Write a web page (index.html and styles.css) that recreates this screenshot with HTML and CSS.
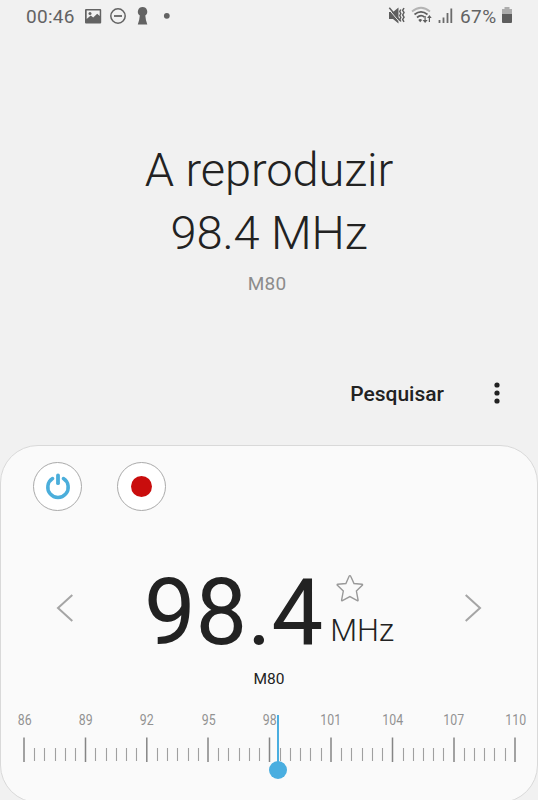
FILE: index.html
```html
<!DOCTYPE html>
<html lang="pt">
<head>
<meta charset="utf-8">
<title>Rádio</title>
<link rel="stylesheet" href="styles.css">
</head>
<body>
<div class="screen">
  <header class="status">
    <span class="clock">00:46</span>
    <svg class="notifications" width="90" height="22" viewBox="82 5 90 22">
      <path fill="#636363" fill-rule="evenodd" d="M86 9h14.200q1 0 1 1v12.500q0 1-1 1H86q-1 0-1-1V10q0-1 1-1zM86.700 10.600V19l4-3.500 2.500 2 4-3.800 2.500 2.200V10.600z"/>
      <circle cx="90" cy="13.500" r="1.500" fill="#636363"/>
      <circle cx="118" cy="16" r="7.200" fill="none" stroke="#636363" stroke-width="1.500"/>
      <path d="M114 16h8" stroke="#636363" stroke-width="1.800"/>
      <path fill="#636363" d="M142.600 7a4.700 4.700 0 0 1 2.700 8.500q.3 4.500 2 9h-9.500q1.700-4.500 2-9A4.700 4.700 0 0 1 142.600 7z"/>
      <circle cx="166.800" cy="15.800" r="2.900" fill="#636363"/>
    </svg>
    <svg class="signals" width="70" height="22" viewBox="386 5 70 22">
      <path fill="#5e5e5e" d="M389 12h4l5.500-4.500v16l-5.500-4.500h-4z"/>
      <path d="M388.500 9L400 22.500" stroke="#f1f1f1" stroke-width="1"/>
      <path d="M389.300 7.700L400 20.500" stroke="#5e5e5e" stroke-width="1.500"/>
      <path d="M400.800 9.500l-1 2 1 2-1 2 1 2-1 2 1 2M404 8l-1.300 2.300 1.300 2.300-1.300 2.300 1.300 2.300-1.300 2.300 1.300 2.300" fill="none" stroke="#5e5e5e" stroke-width="1.500"/>
      <path d="M412 11.500q9-7.500 18 0" fill="none" stroke="#b4b4b4" stroke-width="1.700"/>
      <path d="M414.500 14.500q6.500-5.400 13 0M417 17.500q4-3.400 7.500-.4" fill="none" stroke="#5e5e5e" stroke-width="1.700"/>
      <path fill="#5e5e5e" d="M418.300 20q2-1.800 3.800 0l-1.900 2.300zM425.700 16v4h2l-2.600 3-2.600-3h2v-4zM430 22v-4h1.700l-2.300-3-2.300 3h1.700v4z"/>
      <path d="M439.500 20v3M443.500 17.500V23M447.500 13v10M451.300 8.500V23" stroke="#6b6b6b" stroke-width="1.800"/>
    </svg>
    <span class="percent">67%</span>
    <svg class="battery" width="12" height="18" viewBox="0 0 12 18">
      <path fill="#adadad" d="M3.500 0h5v2H11v6H1V2h2.500z"/>
      <path fill="#5e5e5e" d="M1 7h10v8q0 1-1 1H2q-1 0-1-1z"/>
    </svg>
  </header>

  <section class="now">
    <h1>A reproduzir<br><span class="now-frequency">98.4 MHz</span></h1>
    <p>M80</p>
  </section>

  <nav class="actions">
    <span class="search">Pesquisar</span>
    <svg width="8" height="24" viewBox="0 0 8 24" fill="#222"><circle cx="4" cy="4" r="2.600"/><circle cx="4" cy="12" r="2.600"/><circle cx="4" cy="20" r="2.600"/></svg>
  </nav>

  <main class="card">
    <div class="controls">
      <span class="round"><svg width="30" height="30" viewBox="0 0 30 30" fill="none" stroke="#4baedb" stroke-linecap="round"><path d="M9.600 6.600A10.200 10.200 0 1 0 20.400 6.600" stroke-width="3.500"/><path d="M15 3.500v7.700" stroke-width="3.800"/></svg></span>
      <span class="round"><span class="record"></span></span>
    </div>
    <div class="tuner">
      <svg class="arrow" width="18" height="30" viewBox="0 0 18 30"><path d="M16.300 2L2 15l14.300 13" /></svg>
      <div class="frequency">
        <span class="value">98.4</span>
        <div class="unit">
          <svg width="30" height="30" viewBox="0 0 30 30"><path d="M14.900 1.600q.5 0 .8.700l3.300 7.200 8 .8q1 .1.300 1l-5.900 5.800 1.700 8.900q.1 1-.8.600L14.900 22.600 7.400 26.600q-.9.400-.8-.6l1.700-8.900-5.900-5.800q-.7-.9.300-1l8.200-.8 3.200-7.200q.3-.7.800-.7z"/></svg>
          <span>MHz</span>
        </div>
      </div>
      <svg class="arrow" width="18" height="30" viewBox="0 0 18 30"><path d="M1.700 2L16 15 1.700 28"/></svg>
    </div>
    <p class="station">M80</p>
    <div class="dial">
      <div class="labels"><span>86</span><span>89</span><span>92</span><span>95</span><span>98</span><span>101</span><span>104</span><span>107</span><span>110</span></div>
      <svg class="ticks" width="493" height="26" viewBox="0 0 493 26">
        <path d="M1 .5V25M62.500 .5V25M123.800 .5V25M185 .5V25M246.500 .5V25M308 .5V25M369.500 .5V25M431 .5V25M492 .5V25" stroke="#858585" stroke-width="1.500"/>
        <g stroke="#a0a0a0" stroke-width="1.100">
          <path d="M11.500 11v13M21.500 11v13M32.500 11v13M42.500 11v13M52.500 11v13M72.500 11v13M83.500 11v13M93.500 11v13M103.500 11v13M113.500 11v13"/>
          <path d="M134.500 11v13M144.500 11v13M154.500 11v13M165.500 11v13M175.500 11v13M195.500 11v13M205.500 11v13M216.500 11v13M226.500 11v13M236.500 11v13"/>
          <path d="M257.500 11v13M267.500 11v13M277.500 11v13M287.500 11v13M298.500 11v13M318.500 11v13M328.500 11v13M339.500 11v13M349.500 11v13M359.500 11v13"/>
          <path d="M380.500 11v13M390.500 11v13M400.500 11v13M410.500 11v13M420.500 11v13M441.500 11v13M451.500 11v13M461.500 11v13M471.500 11v13M482.500 11v13"/>
        </g>
      </svg>
      <span class="needle"></span>
    </div>
  </main>
</div>
</body>
</html>
```
FILE: styles.css
```css
* { box-sizing: border-box; }
body { margin: 0; background: #f1f1f1; color: #222; font-family: Roboto, "Liberation Sans", sans-serif; }
h1, p { margin: 0; font-weight: 400; }
svg { display: block; flex: none; }
.screen { height: 800px; overflow: hidden; display: flex; flex-direction: column; }
.status { height: 32px; flex: none; display: flex; align-items: center; padding: 0 25px 0 26px; font-size: 19px; line-height: 32px; color: #636363; }
.clock { width: 56px; padding-top: 2px; letter-spacing: .3px; }
.signals { margin-left: auto; }
.percent { width: 41px; padding: 2px 0 0 4px; letter-spacing: .4px; }
.battery { margin-left: 4px; }
.now { padding-top: 106px; text-align: center; flex: none; }
.now h1 { font-size: 47px; font-weight: 300; line-height: 63px; letter-spacing: -.1px; }
.now p { margin: 8px 4px 0 0; font-size: 19px; line-height: 24px; color: #8c8c8c; letter-spacing: .2px; }
.actions { flex: none; height: 149px; padding: 82px 37px 0 0; display: flex; justify-content: flex-end; gap: 49px; }
.search { font-size: 21px; font-weight: 500; line-height: 32px; }
.actions svg { margin-top: 3px; }
.card { flex: none; height: 358px; border: 1px solid #d9d9d9; border-radius: 38px; background: #fafafa; }
.controls { display: flex; gap: 35px; padding: 16px 0 0 32px; }
.round { width: 49px; height: 49px; display: flex; align-items: center; justify-content: center; border: 1px solid #aaa; border-radius: 50%; background: #fff; }
.record { width: 21px; height: 21px; border-radius: 50%; background: #c90d0d; }
.tuner { margin-top: 51px; height: 92px; display: flex; justify-content: space-between; padding: 0 55px; }
.arrow { margin-top: 31px; fill: none; stroke: #a5a5a5; stroke-width: 2; }
.frequency { display: flex; gap: 7px; }
.value { font-size: 92px; line-height: 102px; }
.unit { display: flex; flex-direction: column; }
.unit svg { margin: 12px 0 0 5px; fill: none; stroke: #999; stroke-width: 1.400; }
.unit span { font-size: 31px; font-weight: 300; line-height: 40px; margin-top: 7px; }
.station { font-size: 15.500px; line-height: 20px; margin-top: 15px; text-align: center; }
.dial { position: relative; margin: 20px 0 0 22px; width: 493px; }
.labels { display: grid; grid-template-columns: repeat(9, 61.400px); margin-left: -29.500px; height: 20px; font-size: 14.500px; line-height: 23px; color: #929292; text-align: center; }
.labels span { transform: scaleX(.85); }
.ticks { margin-top: 8px; }
.needle { position: absolute; left: 253.500px; top: 6px; width: 2.500px; height: 55px; background: #4aaee0; }
.needle::after { content: ""; position: absolute; left: -8px; bottom: -9px; width: 18.500px; height: 18.500px; border-radius: 50%; background: #4aaee0; }
```
